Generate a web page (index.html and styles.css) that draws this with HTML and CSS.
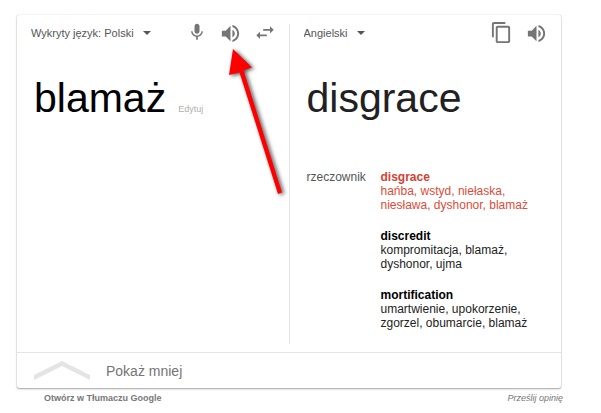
FILE: index.html
```html
<!DOCTYPE html>
<html lang="pl">
<head>
  <meta charset="UTF-8">
  <meta name="viewport" content="width=device-width, initial-scale=1.0">
  <title>Tłumacz</title>
  <link rel="stylesheet" href="styles.css">
</head>
<body>
  <main class="translator">
    <div class="card">
      <div class="panes">
        <!-- Source language -->
        <section class="pane source">
          <div class="toolbar">
            <div class="lang">
              <select class="lang-select" aria-label="Język źródłowy">
                <option>Wykryty język: Polski</option>
              </select>
            </div>
            <div class="tools">
              <button class="icon-btn" aria-label="Mów">
                <svg width="20" height="20" viewBox="0 0 24 24"><path d="M12 13c1.660 0 3-1.340 3-3V4c0-1.660-1.340-3-3-3S9 2.340 9 4v6c0 1.660 1.340 3 3 3zm5.300-3c0 3-2.540 5.100-5.300 5.100S6.700 13 6.700 10H5c0 3.410 2.720 6.230 6 6.720V20h2v-3.280c3.280-.480 6-3.300 6-6.720h-1.700z"/></svg>
              </button>
              <button class="icon-btn" aria-label="Odsłuchaj">
                <svg width="23" height="23" viewBox="0 0 24 24"><path d="M3 9v6h4l5 5V4L7 9H3zm13.500 3c0-1.770-1.020-3.290-2.500-4.030v8.050c1.480-.730 2.500-2.250 2.500-4.020zM14 3.230v2.060c2.890.860 5 3.540 5 6.710s-2.110 5.850-5 6.710v2.060c4.010-.910 7-4.490 7-8.770s-2.990-7.860-7-8.770z"/></svg>
              </button>
              <button class="icon-btn" aria-label="Zamień języki">
                <svg width="22" height="22" viewBox="0 0 24 24"><path d="M6.500 10.500L2.500 14.500l4 4v-3H14v-2H6.500v-3zM21.500 8.500l-4-4v3H10v2h7.500v3l4-4z"/></svg>
              </button>
            </div>
          </div>
          <div class="phrase">
            <span class="word">blamaż</span>
            <a class="edit" href="#">Edytuj</a>
          </div>
        </section>

        <!-- Target language -->
        <section class="pane target">
          <div class="toolbar">
            <div class="lang">
              <select class="lang-select" aria-label="Język docelowy">
                <option>Angielski</option>
              </select>
            </div>
            <div class="tools">
              <button class="icon-btn" aria-label="Kopiuj">
                <svg width="23" height="23" viewBox="0 0 24 24"><path d="M16 0H4c-1.100 0-2 .900-2 2v14h2V2h12V0zm3 4H8c-1.100 0-2 .900-2 2v14c0 1.100.900 2 2 2h11c1.100 0 2-.900 2-2V6c0-1.100-.900-2-2-2zm0 16H8V6h11v14z"/></svg>
              </button>
              <button class="icon-btn" aria-label="Odsłuchaj tłumaczenie">
                <svg width="23" height="23" viewBox="0 0 24 24"><path d="M3 9v6h4l5 5V4L7 9H3zm13.500 3c0-1.770-1.020-3.290-2.500-4.030v8.050c1.480-.730 2.500-2.250 2.500-4.020zM14 3.230v2.060c2.890.860 5 3.540 5 6.710s-2.110 5.850-5 6.710v2.060c4.010-.910 7-4.490 7-8.770s-2.990-7.860-7-8.770z"/></svg>
              </button>
            </div>
          </div>
          <div class="phrase">
            <span class="word result">disgrace</span>
          </div>
          <div class="dictionary">
            <div class="part">rzeczownik</div>
            <dl class="entries">
              <div class="entry main">
                <dt>disgrace</dt>
                <dd>hańba, wstyd, niełaska, niesława, dyshonor, blamaż</dd>
              </div>
              <div class="entry">
                <dt>discredit</dt>
                <dd>kompromitacja, blamaż, dyshonor, ujma</dd>
              </div>
              <div class="entry">
                <dt>mortification</dt>
                <dd>umartwienie, upokorzenie, zgorzel, obumarcie, blamaż</dd>
              </div>
            </dl>
          </div>
        </section>
      </div>

      <button class="show-less">
        <svg width="56" height="20" viewBox="0 0 56 20"><path d="M0 14L28 0l28 14v5L28 5 0 19z"/></svg>
        <span>Pokaż mniej</span>
      </button>
    </div>

    <div class="links">
      <a class="open" href="#">Otwórz w Tłumaczu Google</a>
      <a class="feedback" href="#">Prześlij opinię</a>
    </div>

    <!-- Arrow pointing at the listen button -->
    <svg class="pointer" width="80" height="170" viewBox="0 0 80 170" aria-hidden="true">
      <path d="M13 9L32 27.500L23.500 30.300L62 152.500L58 154L19.500 32.500L9 35z"/>
    </svg>
  </main>
</body>
</html>
```
FILE: styles.css
```css
* {
  box-sizing: border-box;
}

body {
  font-family: Arial, "Liberation Sans", sans-serif;
  font-size: 12px;
  line-height: 14px;
  margin: 0;
  background-color: #fff;
  color: #222;
}

button,
select {
  font-family: inherit;
  border: none;
  background: none;
  padding: 0;
  margin: 0;
  cursor: pointer;
}

a {
  text-decoration: none;
}

.translator {
  position: relative;
  padding: 15px 40px 0 17px;
}

/* Card */
.card {
  border-radius: 2px;
  box-shadow: 0 1px 2px rgba(0, 0, 0, 0.35), 0 0 1px rgba(0, 0, 0, 0.3);
}

.panes {
  display: flex;
  padding: 9px 0 8px;
}

.pane {
  flex: 1;
  min-height: 320px;
}

.source {
  border-right: 1px solid #e5e5e5;
}

/* Language and icons */
.toolbar {
  display: flex;
  justify-content: space-between;
  align-items: center;
  height: 18px;
  padding: 0 13px 0 14px;
}

.lang {
  display: flex;
  align-items: center;
  gap: 9px;
}

.lang::after {
  content: "";
  border: 4px solid transparent;
  border-top-color: #555;
  border-bottom: none;
}

.lang-select {
  appearance: none;
  field-sizing: content;
  font-size: 11px;
  color: #555;
}

.tools {
  display: flex;
  align-items: center;
  gap: 12px;
}

.icon-btn {
  display: flex;
}

.icon-btn svg {
  fill: #757575;
}

/* Translated text */
.phrase {
  display: flex;
  align-items: baseline;
  gap: 12px;
  padding: 32px 17px 0;
}

.word {
  font-size: 41px;
  line-height: 48px;
  color: #000;
}

.result {
  color: #212121;
}

.edit {
  font-size: 9px;
  color: #b0b0b0;
}

/* Dictionary */
.dictionary {
  display: flex;
  gap: 14px;
  padding: 48px 16px 0 17px;
}

.part {
  color: #555;
  width: 60px;
}

.entries {
  flex: 1;
  margin: 0;
}

.entry {
  margin-bottom: 17px;
}

.entry:last-child {
  margin-bottom: 0;
}

.entry dt {
  font-weight: bold;
  color: #000;
}

.entry dd {
  margin: 0;
  max-width: 160px;
}

.main dt,
.main dd {
  color: #dd4b39;
}

.main dt {
  color: #d23f31;
}

/* Bottom bar */
.show-less {
  display: flex;
  align-items: center;
  gap: 16px;
  width: 100%;
  height: 36px;
  padding: 0 17px;
  border-top: 1px solid #e5e5e5;
  font-size: 14px;
  color: #757575;
}

.show-less svg {
  fill: #e4e4e4;
}

.links {
  display: flex;
  justify-content: space-between;
  margin-right: -2px;
  padding: 3px 0 0 27px;
  font-size: 9px;
}

.links a {
  color: #777;
}

.open {
  font-weight: bold;
}

.feedback {
  font-style: italic;
}

.pointer {
  position: absolute;
  top: 40px;
  left: 220px;
  fill: #f00;
  filter: drop-shadow(2px 1px 2px rgba(0, 0, 0, 0.7));
}
```
